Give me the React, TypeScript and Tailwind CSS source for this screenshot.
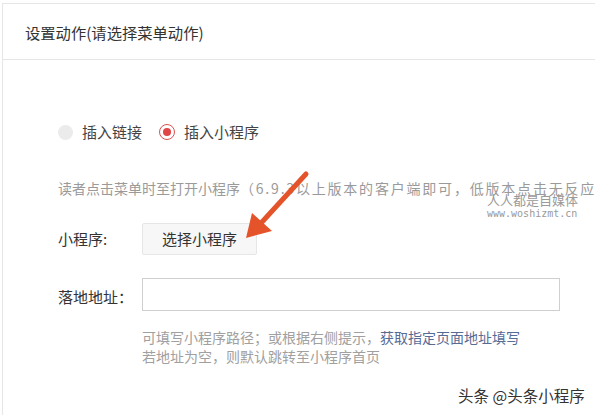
import React from 'react';

const font = { fontFamily: '"Noto Sans CJK SC", "Noto Sans", sans-serif' };

function Radio({ checked, label }: { checked?: boolean; label: string }) {
  return (
    <label className="flex items-center gap-[9px] text-[15px] leading-[20px] text-[#444]">
      {checked ? (
        <span className="w-[16px] h-[16px] rounded-full border border-[#d9534f] flex items-center justify-center">
          <span className="w-[8px] h-[8px] rounded-full bg-[#e04646]" />
        </span>
      ) : (
        <span className="w-[15px] h-[15px] rounded-full bg-[#ebebeb]" />
      )}
      {label}
    </label>
  );
}

export default function App() {
  return (
    <div className="relative w-[595px] h-[415px] overflow-hidden bg-white" style={font}>
      {/* Panel */}
      <div className="ml-[2px] mt-[3px] h-[412px] border-l border-t border-[#e6e6e6]">
        <div className="h-[56px] border-b border-[#e6e6e6] pl-[22px] flex items-center">
          <h2 className="text-[15.3px] text-[#333] leading-[20px]">设置动作(请选择菜单动作)</h2>
        </div>

        <div className="pl-[55px] pt-[62px]">
          <div className="flex items-center gap-[17px]">
            <Radio label="插入链接" />
            <Radio checked label="插入小程序" />
          </div>

          <p className="mt-[36px] text-[14px] leading-[20px] text-[#9a9a9a] whitespace-nowrap">
            读者点击菜单时至打开小程序
            <span className="tracking-[1.8px]">（6.9.3以上版本的客户端即可，低版本点击无反应</span>
          </p>

          <div className="mt-[25px] flex items-center">
            <span className="w-[84px] text-[15px] text-[#333]">小程序:</span>
            <button className="h-[32px] w-[115px] rounded-[2px] border border-[#e6e6e6] bg-[#f7f7f7] text-[15px] text-[#333]">
              选择小程序
            </button>
          </div>

          <div className="mt-[23px] flex items-center">
            <span className="w-[84px] pt-[6px] text-[15px] text-[#333]">落地地址：</span>
            <input className="h-[33px] w-[418px] border border-[#cfcfcf] outline-none px-2" />
          </div>

          <div className="mt-[17px] pl-[84px] text-[14px] leading-[19px] text-[#a0a0a0]">
            <p>
              可填写小程序路径；或根据右侧提示，<span className="text-[#576b95]">获取指定页面地址填写</span>
            </p>
            <p>若地址为空，则默认跳转至小程序首页</p>
          </div>
        </div>
      </div>

      {/* watermark */}
      <div className="absolute left-[487px] top-[193px] text-[#9a9a9a] leading-[14px]">
        <div className="text-[13px]">人人都是自媒体</div>
        <div className="text-[10px] mt-[0px]" style={{ fontFamily: '"DejaVu Sans Mono", monospace' }}>
          www.woshizmt.cn
        </div>
      </div>

      <div className="absolute left-[458px] top-[384px] text-[15.5px] leading-[22px] text-[#333]">
        头条 @头条小程序
      </div>

      {/* arrow */}
      <svg className="absolute left-0 top-0" width="595" height="415" viewBox="0 0 595 415">
        <line x1="306" y1="174" x2="262" y2="222" stroke="#e5532b" strokeWidth="5" strokeLinecap="round" />
        <polygon points="246,238 252,213 272,231" fill="#e5532b" />
      </svg>
    </div>
  );
}
